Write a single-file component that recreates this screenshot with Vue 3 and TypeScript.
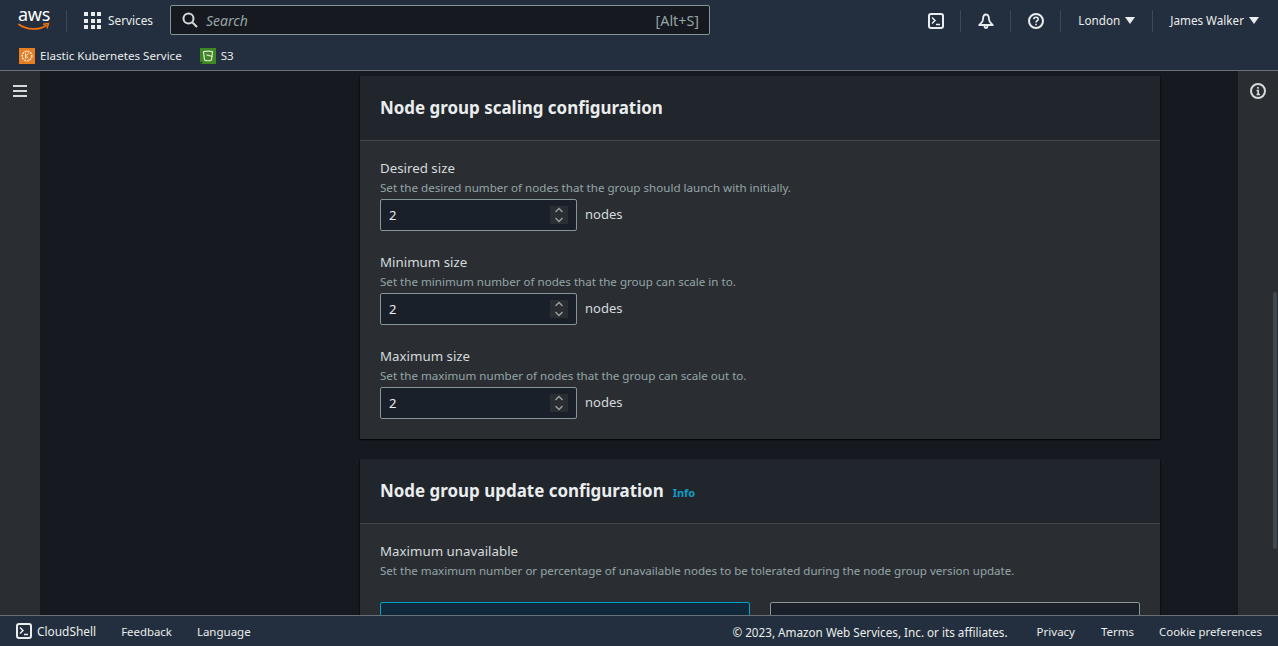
<template>
  <div class="console">
    <header class="top-nav">
      <div class="nav-row">
        <div class="logo">
          <span class="logo-text">aws</span>
          <svg class="smile" width="32" height="10" viewBox="0 0 32 10">
            <path d="M1 2.500C9 8 21 8.500 28 3.500" fill="none" stroke="#ec7211" stroke-width="1.800" stroke-linecap="round" />
            <path d="M25 2.200 30.500 1.500 29 6.500" fill="none" stroke="#ec7211" stroke-width="1.500" stroke-linejoin="round" />
          </svg>
        </div>
        <span class="divider services-divider"></span>
        <button class="services">
          <span class="grid-icon"><i v-for="n in 9" :key="n"></i></span>
          <span class="raised">Services</span>
        </button>
        <div class="search">
          <svg width="16" height="16" viewBox="0 0 16 16" fill="none" stroke="#d5dbdb" stroke-width="2">
            <circle cx="6.500" cy="6.500" r="5" />
            <path d="M10.500 10.500 15 15" />
          </svg>
          <span class="search-placeholder">Search</span>
          <span class="search-shortcut">[Alt+S]</span>
        </div>
        <div class="nav-right">
          <button class="nav-icon">
            <svg width="16" height="16" viewBox="0 0 16 16" fill="none" stroke="#eaeded" stroke-width="2">
              <rect x="1" y="1" width="14" height="14" rx="2" />
              <path d="M4 4.500 7 7.500 4 10.500M8 11.500h4" stroke-width="1.500" />
            </svg>
          </button>
          <span class="divider"></span>
          <button class="nav-icon">
            <svg width="16" height="16" viewBox="0 0 16 16" fill="none" stroke="#eaeded" stroke-width="1.800">
              <path d="M8 1.500C5.500 1.500 5 4 5 6.500 5 9 2.500 10.500 1.200 12h13.600C13.500 10.500 11 9 11 6.500 11 4 10.500 1.500 8 1.500Z" stroke-linejoin="round" />
              <circle cx="8" cy="13.500" r="1.500" />
            </svg>
          </button>
          <span class="divider"></span>
          <button class="nav-icon">
            <svg width="16" height="16" viewBox="0 0 16 16" fill="none" stroke="#eaeded" stroke-width="2">
              <circle cx="8" cy="8" r="7" />
              <path d="M5.800 6.200C5.800 4.900 6.800 4.200 8 4.200s2.200.8 2.200 2c0 1.700-2.200 1.800-2.200 3.300" stroke-width="1.600" />
              <path d="M8 10.800v1.500" stroke-width="1.600" />
            </svg>
          </button>
          <span class="divider"></span>
          <button class="menu region"><span class="raised">London</span> <span class="caret"></span></button>
          <span class="divider"></span>
          <button class="menu user"><span class="raised">James Walker</span> <span class="caret"></span></button>
        </div>
      </div>
      <div class="favorites">
        <a class="fav">
          <span class="fav-icon eks">
            <svg width="16" height="16" viewBox="0 0 16 16" fill="none" stroke="#f6e3cf" stroke-width="1">
              <circle cx="8" cy="8" r="4.800" stroke-dasharray="2 .8" stroke-width="1.500" />
              <path d="M6.500 5.500V10.500M6.500 8l3-2.500M6.500 8l3 2.500" />
            </svg>
          </span>
          Elastic Kubernetes Service
        </a>
        <a class="fav">
          <span class="fav-icon s3">
            <svg width="16" height="16" viewBox="0 0 16 16" fill="none" stroke="#dbe8d4" stroke-width="1.200">
              <path d="M3.500 3.800C5 2.800 11 2.800 12.500 3.800L11.500 12C10 13 6 13 4.500 12Z" />
              <path d="M6.500 6.800 12.500 8.500" />
              <path d="M.5 15.500 2 14" stroke="#16191f" />
            </svg>
          </span>
          S3
        </a>
      </div>
    </header>

    <div class="body">
      <aside class="side-rail">
        <svg class="rail-icon" width="16" height="16" viewBox="0 0 16 16" stroke="#d5dbdb" stroke-width="2">
          <path d="M1 3h14M1 8h14M1 13h14" />
        </svg>
      </aside>

      <main class="content">
        <section class="card">
          <div class="card-header">
            <h2>Node group scaling configuration</h2>
          </div>
          <div class="card-body">
            <div v-for="field in sizeFields" :key="field.label" class="field">
              <div class="field-label">{{ field.label }}</div>
              <div class="field-desc">{{ field.description }}</div>
              <div class="field-control">
                <div class="number-input">
                  <span>{{ field.value }}</span>
                  <span class="spinner">
                    <svg width="10" height="18" viewBox="0 0 10 18" fill="none" stroke="#95a5a6" stroke-width="1.300">
                      <path d="M1.500 6 5 2.500 8.500 6M1.500 12 5 15.500 8.500 12" />
                    </svg>
                  </span>
                </div>
                <span class="unit">nodes</span>
              </div>
            </div>
          </div>
        </section>

        <section class="card">
          <div class="card-header">
            <h2>Node group update configuration</h2>
            <a class="info">Info</a>
          </div>
          <div class="card-body">
            <div class="field-label">Maximum unavailable</div>
            <div class="field-desc long">
              Set the maximum number or percentage of unavailable nodes to be tolerated during the node group version update.
            </div>
            <div class="tiles">
              <div class="tile selected"></div>
              <div class="tile"></div>
            </div>
          </div>
        </section>
      </main>

      <aside class="side-rail">
        <svg class="rail-icon" width="16" height="16" viewBox="0 0 16 16" fill="none" stroke="#d5dbdb" stroke-width="2">
          <circle cx="8" cy="8" r="7" />
          <path d="M6.500 7.500H8.200V11.500M6.500 11.500H10M8 4v1.800" stroke-width="1.700" />
        </svg>
        <span class="scrollbar"></span>
      </aside>
    </div>

    <footer class="footer">
      <a class="foot-link shell">
        <svg width="16" height="16" viewBox="0 0 16 16" fill="none" stroke="#eaeded" stroke-width="2">
          <rect x="1" y="1" width="14" height="14" rx="2" />
          <path d="M4 4.500 7 7.500 4 10.500M8 11.500h4" stroke-width="1.500" />
        </svg>
        CloudShell
      </a>
      <a class="foot-link tight">Feedback</a>
      <a class="foot-link">Language</a>
      <span class="foot-right">
        <span class="copyright">© 2023, Amazon Web Services, Inc. or its affiliates.</span>
        <a class="foot-link privacy">Privacy</a>
        <a class="foot-link">Terms</a>
        <a class="foot-link tight">Cookie preferences</a>
      </span>
    </footer>
  </div>
</template>

<script setup lang="ts">
interface SizeField {
  label: string;
  description: string;
  value: number;
}

const sizeFields: SizeField[] = [
  {
    label: "Desired size",
    description: "Set the desired number of nodes that the group should launch with initially.",
    value: 2,
  },
  {
    label: "Minimum size",
    description: "Set the minimum number of nodes that the group can scale in to.",
    value: 2,
  },
  {
    label: "Maximum size",
    description: "Set the maximum number of nodes that the group can scale out to.",
    value: 2,
  },
];
</script>

<style>
html,
body {
  margin: 0;
  background: #16191f;
}
</style>

<style scoped>
.console {
  display: flex;
  flex-direction: column;
  height: 646px;
  overflow: hidden;
  font-family: "Noto Sans", "Open Sans", sans-serif;
  color: #d5dbdb;
}

button {
  border: none;
  background: none;
  padding: 0;
  font: inherit;
  color: inherit;
}

.top-nav {
  flex: none;
  height: 70px;
  box-sizing: content-box;
  background: #232f3e;
  border-bottom: 1px solid #687078;
}

.nav-row {
  display: flex;
  align-items: center;
  height: 41px;
  padding-left: 18px;
  padding-right: 19px;
}

.logo {
  position: relative;
  width: 32px;
  height: 28px;
  margin-top: -3px;
}

.logo-text {
  display: block;
  font-size: 18px;
  line-height: 18px;
  color: #fff;
  letter-spacing: -0.3px;
  text-align: center;
}

.smile {
  position: absolute;
  left: 0;
  top: 17px;
}

.divider {
  width: 1px;
  height: 22px;
  background: #414750;
}

.services-divider {
  margin-left: 16px;
}

.services {
  display: flex;
  align-items: center;
  gap: 7px;
  margin-left: 17px;
  font-size: 11.800px;
  color: #eaeded;
}

.raised {
  margin-bottom: 1px;
}

.grid-icon {
  display: grid;
  grid-template-columns: repeat(3, 4px);
  gap: 2.500px;
}

.grid-icon i {
  width: 4px;
  height: 4px;
  background: #eaeded;
}

.search {
  display: flex;
  align-items: center;
  box-sizing: border-box;
  width: 540px;
  height: 30px;
  margin-left: 17px;
  margin-top: -1px;
  padding: 0 10px 0 11px;
  background: #16191f;
  border: 1px solid #879596;
  border-radius: 2px;
}

.search-placeholder {
  margin-left: 8px;
  font-size: 14px;
  font-style: italic;
  color: #95a5a6;
}

.search-shortcut {
  margin-left: auto;
  font-size: 14.300px;
  color: #95a5a6;
}

.nav-right {
  display: flex;
  align-items: center;
  margin-left: auto;
}

.nav-icon {
  display: flex;
  width: 49px;
  justify-content: center;
}

.menu {
  display: flex;
  align-items: center;
  gap: 5px;
  font-size: 11.700px;
  color: #eaeded;
}

.region {
  padding: 0 17px;
}

.user {
  padding-left: 17px;
}

.caret {
  width: 0;
  height: 0;
  border-left: 5px solid transparent;
  border-right: 5px solid transparent;
  border-top: 7px solid #eaeded;
}

.favorites {
  display: flex;
  align-items: center;
  gap: 18px;
  height: 29px;
  padding-left: 19px;
  font-size: 11.600px;
  color: #eaeded;
}

.fav {
  display: flex;
  align-items: center;
  gap: 5px;
}

.fav-icon {
  display: flex;
  width: 16px;
  height: 16px;
}

.eks {
  background: #e67e22;
}

.s3 {
  background: #3f8624;
}

.body {
  display: flex;
  flex: 1;
  min-height: 0;
}

.side-rail {
  position: relative;
  flex: none;
  width: 40px;
  background: #2a2e33;
  display: flex;
  justify-content: center;
  padding-top: 12px;
  box-sizing: border-box;
}

.rail-icon {
  display: block;
}

.scrollbar {
  position: absolute;
  right: 1px;
  top: 221px;
  width: 4px;
  height: 257px;
  border-radius: 2px;
  background: #414750;
}

.content {
  flex: 1;
  min-width: 0;
  overflow: hidden;
  padding: 5px 0 0 320px;
}

.card {
  width: 800px;
  margin-bottom: 20px;
  background: #2a2e33;
  box-shadow: 0 1px 1px 0 rgba(0, 0, 0, 0.5), 1px 1px 1px 0 rgba(0, 0, 0, 0.3), -1px 1px 1px 0 rgba(0, 0, 0, 0.3);
}

.card-header {
  display: flex;
  align-items: center;
  box-sizing: border-box;
  height: 65px;
  padding: 0 20px 2px;
  background: #21252c;
  border-bottom: 1px solid #414750;
}

.card-header h2 {
  margin: 0;
  font-size: 16.950px;
  font-weight: 700;
  color: #eaeded;
}

.info {
  margin-left: 9px;
  margin-top: 5px;
  font-size: 11px;
  font-weight: 700;
  color: #0f9dc7;
}

.card-body {
  padding: 18px 20px 20px;
}

.field + .field {
  margin-top: 22px;
}

.field-label {
  font-size: 13.300px;
  line-height: 18px;
  color: #d5dbdb;
}

.field-desc {
  font-size: 11.600px;
  line-height: 22px;
  color: #95a5a6;
}

.field-desc.long {
  font-size: 11.550px;
}

.field-control {
  display: flex;
  align-items: center;
  gap: 8px;
}

.number-input {
  display: flex;
  align-items: center;
  justify-content: space-between;
  box-sizing: border-box;
  width: 197px;
  height: 32px;
  padding: 0 8px;
  background: #1a2029;
  border: 1px solid #879596;
  border-radius: 2px;
  font-size: 13px;
  color: #eaeded;
}

.spinner {
  display: flex;
  align-items: center;
  justify-content: center;
  width: 18px;
  height: 18px;
  background: #2a2e33;
}

.unit {
  margin-top: -2px;
  font-size: 13px;
  color: #d5dbdb;
}

.tiles {
  display: grid;
  grid-template-columns: 370px 370px;
  gap: 20px;
  margin-top: 20px;
}

.tile {
  height: 60px;
  box-sizing: border-box;
  background: #1a2029;
  border: 1px solid #879596;
  border-radius: 2px;
}

.tile.selected {
  background: #12293b;
  border-color: #00a1c9;
}

.footer {
  flex: none;
  display: flex;
  align-items: center;
  box-sizing: border-box;
  height: 31px;
  padding: 0 16px;
  gap: 25px;
  background: #232f3e;
  border-top: 1px solid #687078;
  font-size: 11.500px;
  color: #eaeded;
}

.foot-link.tight {
  font-size: 11.400px;
}

.shell {
  display: flex;
  align-items: center;
  gap: 5px;
  font-size: 11.900px;
}

.foot-right {
  display: flex;
  align-items: center;
  gap: 25px;
  margin-left: auto;
  padding-top: 1px;
}

.copyright {
  margin-right: 4px;
  font-size: 11.700px;
}

.privacy {
  margin-right: 1px;
}
</style>
